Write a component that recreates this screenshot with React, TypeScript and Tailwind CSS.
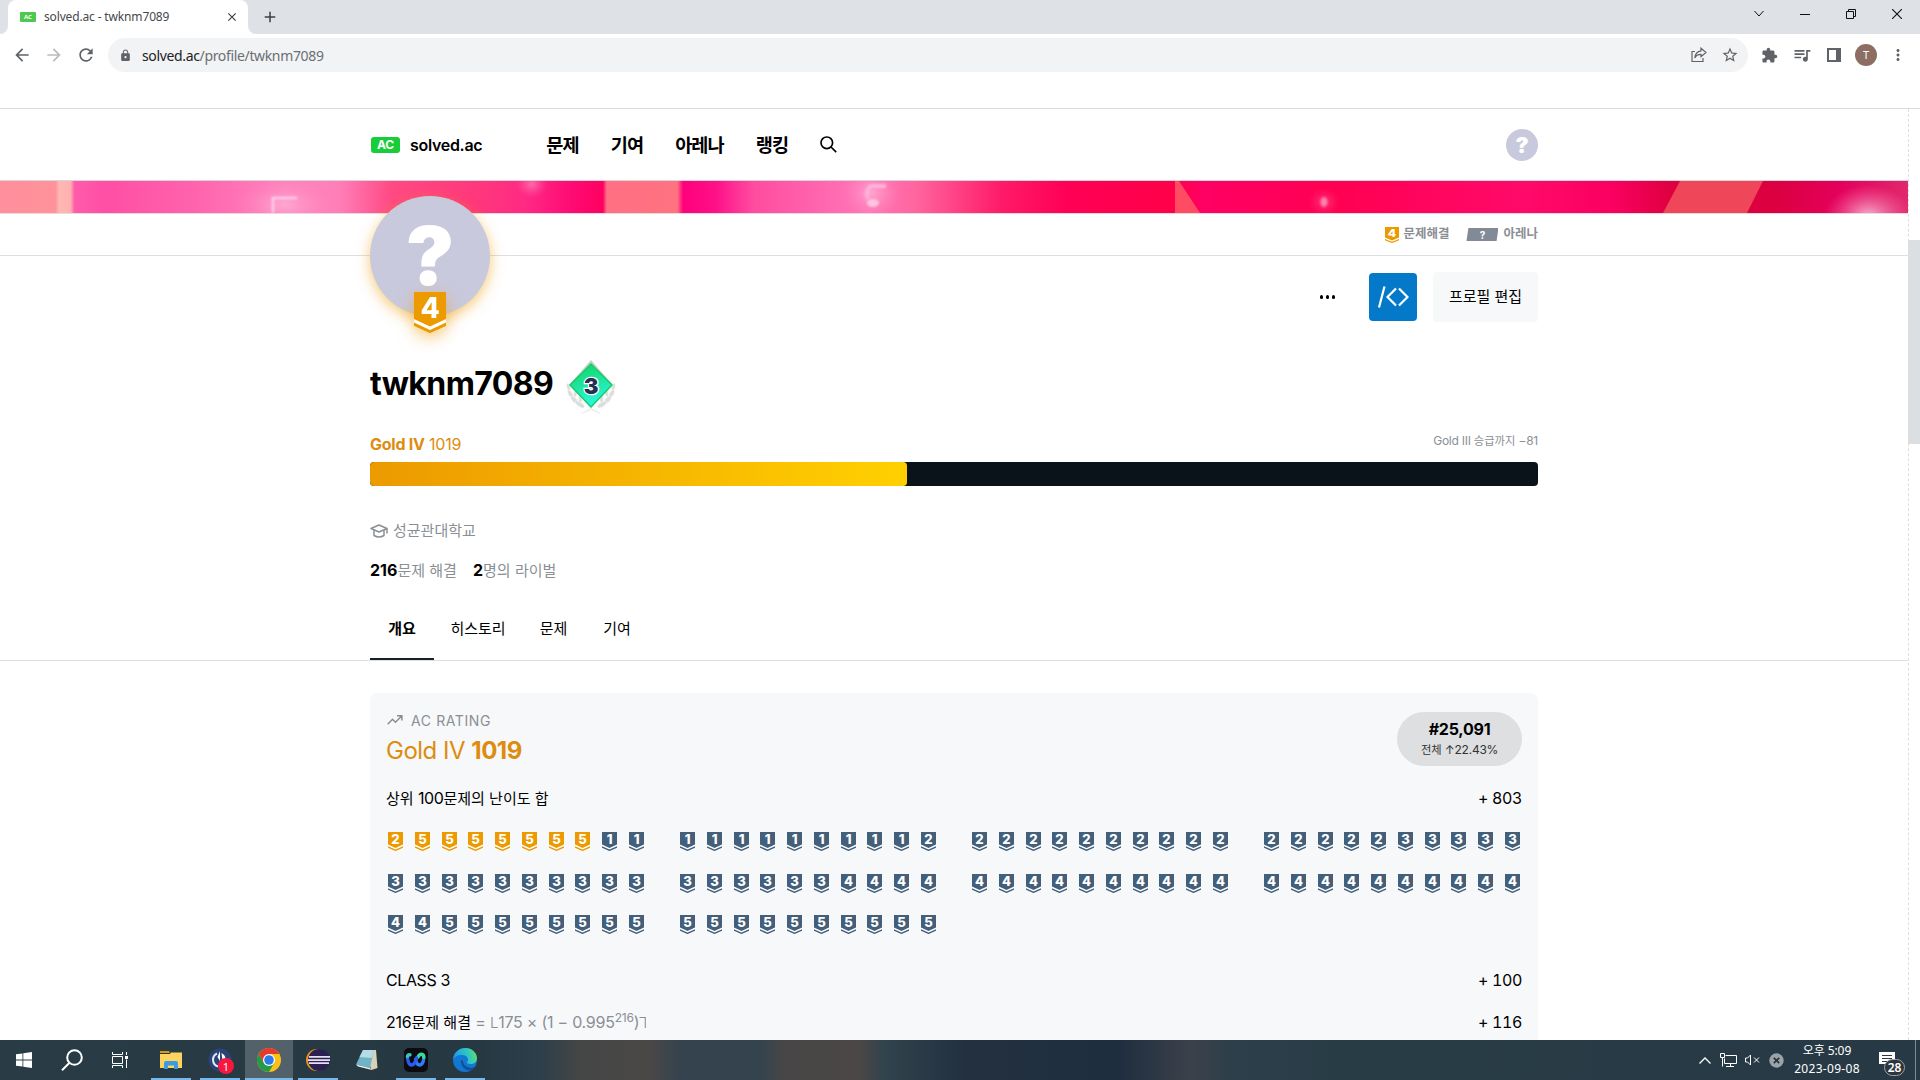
import React from "react";
import {
  MdArrowBack,
  MdArrowForward,
  MdRefresh,
  MdLock,
  MdStarBorder,
  MdExtension,
  MdQueueMusic,
  MdMoreVert,
  MdAdd,
  MdClose,
} from "react-icons/md";

const GOLD = "#ec9a00";
const SILVER = "#435f7a";

/* Hangul run, set slightly smaller than the Latin text beside it */
function K({ children }: { children: React.ReactNode }) {
  return <span className="text-[0.94em] tracking-normal">{children}</span>;
}

function Tier({ level, color, width, height }: { level: number; color: string; width: number; height: number }) {
  return (
    <svg width={width} height={height} viewBox="0 0 32 41" preserveAspectRatio="none" className="block shrink-0">
      <polygon points="0,26 16,34 32,26 32,34 16,41 0,34" fill="#fff" />
      <polygon points="0,0 32,0 32,27 16,34.5 0,27" fill={color} />
      <polygon points="0,30.5 16,38 32,30.5 32,34 16,41.2 0,34" fill={color} />
      <text x="16" y="26" textAnchor="middle" fontSize="28" fontWeight="800" fill="#fff" fontFamily="Inter, sans-serif">
        {level}
      </text>
    </svg>
  );
}

function AcLogo({ small }: { small?: boolean }) {
  return small ? (
    <span className="flex h-[10px] w-4 items-center justify-center rounded-[1px] bg-[#4cc94e] text-[6px] font-bold text-white">AC</span>
  ) : (
    <span className="flex h-4 w-[29px] items-center justify-center rounded-[3px] bg-[#17ce3a] text-[12px] font-bold leading-none text-white">AC</span>
  );
}

function BrowserChrome() {
  return (
    <div className="shrink-0 bg-white font-['Noto_Sans','Noto_Sans_CJK_KR',sans-serif]">
      <div className="flex h-[34px] items-end bg-[#dee1e6]">
        <div className="h-2 w-2 bg-white">
          <div className="h-2 w-2 rounded-br-lg bg-[#dee1e6]" />
        </div>
        <div className="flex h-[34px] w-[240px] items-center rounded-t-lg bg-white pl-3 pr-[9px]">
          <AcLogo small />
          <span className="ml-2 flex-1 text-[12px] tracking-[-0.15px] text-[#45494d]">solved.ac - twknm7089</span>
          <MdClose className="size-[14px] text-[#3c4043]" />
        </div>
        <div className="h-2 w-2 bg-white">
          <div className="h-2 w-2 rounded-bl-lg bg-[#dee1e6]" />
        </div>
        <MdAdd className="mb-2 ml-[5px] size-[18px] text-[#3c4043]" />
        <div className="ml-auto flex h-[28px] items-center gap-9 self-start pr-[18px]">
          <svg width="10" height="10" viewBox="0 0 10 10" fill="none" stroke="#111" strokeWidth="1"><path d="M0.5 2l4.5 5 4.5-5" /></svg>
          <svg width="10" height="10" viewBox="0 0 10 10" stroke="#111"><path d="M0 5.5h10" /></svg>
          <svg width="10" height="10" viewBox="0 0 10 10" fill="none" stroke="#111"><path d="M0.5 2.5h7v7h-7z M2.5 2.5v-2h7v7h-2" /></svg>
          <svg width="10" height="10" viewBox="0 0 10 10" stroke="#111" strokeWidth="1.1"><path d="M0 0l10 10M10 0L0 10" /></svg>
        </div>
      </div>
      <div className="flex h-[42px] items-center pl-3">
        <div className="flex items-center gap-3 text-[#5f6368]">
          <MdArrowBack className="size-5" />
          <MdArrowForward className="size-5 text-[#b9bcbf]" />
          <MdRefresh className="size-5" />
        </div>
        <div className="ml-3 flex h-[34px] w-[1640px] items-center rounded-full bg-[#f1f3f4] pl-[11px] pr-[9px] text-[#5f6368]">
          <MdLock className="size-[13px]" />
          <span className="ml-[10px] flex-1 text-[14px] tracking-[-0.35px] text-[#6b6f74]">
            <span className="text-[#202124]">solved.ac</span>/profile/twknm7089
          </span>
          <svg width="16" height="16" viewBox="0 0 16 16" fill="none" stroke="#5f6368" strokeWidth="1.2" className="mr-[14px]">
            <path d="M4 4.5H1v10h11v-3.5" />
            <path d="M10 1.2l5 4.3-5 4.3V7.4C7 7.4 5 8.6 3.8 11 4.2 7 6.5 4.2 10 3.8z" />
          </svg>
          <MdStarBorder className="size-[18px]" />
        </div>
        <div className="flex flex-1 items-center text-[#5f6368]">
          <MdExtension className="ml-[13px] size-[17px]" />
          <MdQueueMusic className="ml-[14px] size-5" />
          <svg width="14" height="14" viewBox="0 0 14 14" className="ml-[15px]"><path d="M0 0h14v14H0zM2 2v10h7V2z" fill="#5f6368" fillRule="evenodd" /></svg>
          <span className="ml-[14px] flex size-[22px] items-center justify-center rounded-full bg-[#8d6e63] text-[11px] text-white">T</span>
          <MdMoreVert className="ml-[12px] size-[18px]" />
        </div>
      </div>
      <div className="h-8" />
      <div className="h-px bg-[#d8dadc]" />
    </div>
  );
}

function Header() {
  return (
    <header className="flex h-[71px] items-center px-[370px]">
      <div className="flex items-center pl-px">
        <AcLogo />
        <span className="ml-[10px] text-[16px] font-semibold leading-none tracking-[-0.3px]">solved.ac</span>
      </div>
      <nav className="ml-16 mt-[2px] flex items-center gap-8 text-[18.6px] font-bold leading-none tracking-[-0.9px]">
        <span>문제</span>
        <span>기여</span>
        <span>아레나</span>
        <span>랭킹</span>
      </nav>
      <svg width="17" height="17" viewBox="0 0 17 17" fill="none" stroke="#000" strokeWidth="1.7" className="ml-8">
        <circle cx="6.8" cy="6.8" r="5.8" />
        <path d="M11 11l5.2 5.2" />
      </svg>
      <div className="ml-auto flex size-8 items-center justify-center rounded-full bg-[#c9c9de] text-[22px] font-black leading-none text-white">?</div>
    </header>
  );
}

function Banner() {
  return (
    <svg width="1908" height="32" viewBox="0 0 1908 32" preserveAspectRatio="none" className="block">
      <defs>
        <linearGradient id="bg" gradientUnits="userSpaceOnUse" x1="0" y1="0" x2="1908" y2="0">
          <stop offset="0" stopColor="#ff8f9c" />
          <stop offset="0.029" stopColor="#ff929a" />
          <stop offset="0.031" stopColor="#ffb8b5" />
          <stop offset="0.037" stopColor="#ffb0b0" />
          <stop offset="0.039" stopColor="#ff5cab" />
          <stop offset="0.055" stopColor="#ff4ea5" />
          <stop offset="0.1" stopColor="#ff62ac" />
          <stop offset="0.15" stopColor="#ff84be" />
          <stop offset="0.178" stopColor="#ff7eb8" />
          <stop offset="0.205" stopColor="#ff4a84" />
          <stop offset="0.25" stopColor="#ff377c" />
          <stop offset="0.275" stopColor="#ff2a84" />
          <stop offset="0.3" stopColor="#ff0a74" />
          <stop offset="0.316" stopColor="#ff0060" />
          <stop offset="0.318" stopColor="#ff7084" />
          <stop offset="0.355" stopColor="#ff7280" />
          <stop offset="0.358" stopColor="#ff007c" />
          <stop offset="0.375" stopColor="#ff1088" />
          <stop offset="0.395" stopColor="#ff4ca0" />
          <stop offset="0.455" stopColor="#ff78b8" />
          <stop offset="0.48" stopColor="#ff659e" />
          <stop offset="0.525" stopColor="#ff1a68" />
          <stop offset="0.56" stopColor="#ff0056" />
          <stop offset="0.615" stopColor="#ff0048" />
          <stop offset="0.63" stopColor="#ff0064" />
          <stop offset="0.7" stopColor="#ff0052" />
          <stop offset="0.8" stopColor="#ff0a6a" />
          <stop offset="0.845" stopColor="#fa0060" />
          <stop offset="0.875" stopColor="#e00042" />
          <stop offset="0.93" stopColor="#dc0040" />
          <stop offset="0.965" stopColor="#e4005c" />
          <stop offset="1" stopColor="#e2286c" />
        </linearGradient>
        <radialGradient id="glow">
          <stop offset="0" stopColor="#fff" stopOpacity="0.65" />
          <stop offset="1" stopColor="#ff9ccb" stopOpacity="0" />
        </radialGradient>
        <filter id="soft" x="-50%" y="-50%" width="200%" height="200%">
          <feGaussianBlur stdDeviation="0.9" />
        </filter>
      </defs>
      <rect width="1908" height="32" fill="url(#bg)" />
      <polygon points="1175,0 1179,0 1200,32 1175,32" fill="#ff4c62" />
      <polygon points="1680,0 1763,0 1747,32 1663,32" fill="#f0465a" />
      <ellipse cx="284" cy="24" rx="50" ry="24" fill="url(#glow)" opacity="0.45" />
      <path d="M273 32V17h24" fill="none" stroke="#ffd0ea" strokeWidth="2.5" filter="url(#soft)" />
      <ellipse cx="532" cy="3" rx="16" ry="14" fill="url(#glow)" opacity="0.5" />
      <ellipse cx="872" cy="12" rx="30" ry="24" fill="url(#glow)" opacity="0.5" />
      <path d="M886 5h-15q-4 2-4 9l1 4" fill="none" stroke="#ffb4da" strokeWidth="4" filter="url(#soft)" />
      <ellipse cx="873" cy="22" rx="6" ry="4" fill="#ffc4e2" filter="url(#soft)" />
      <ellipse cx="1324" cy="21" rx="16" ry="14" fill="url(#glow)" opacity="0.3" />
      <ellipse cx="1324" cy="21" rx="3.5" ry="5" fill="#ff7eaa" filter="url(#soft)" />
      <ellipse cx="1868" cy="34" rx="44" ry="30" fill="url(#glow)" />
    </svg>
  );
}

function ClassBadge() {
  return (
    <svg width="50" height="54" viewBox="0 0 50 54" className="block">
      <defs>
        <linearGradient id="cls" x1="0" y1="0" x2="0.3" y2="1">
          <stop offset="0" stopColor="#0fd45e" />
          <stop offset="0.5" stopColor="#1fe39a" />
          <stop offset="1" stopColor="#2cf5e0" />
        </linearGradient>
      </defs>
      <polygon points="25,0 46,24 25,48 4,24" fill="#c9cbcd" />
      <g fill="#dcddde" stroke="#fff" strokeWidth="0.5">
        {[0, 1].map((side) => (
          <g key={side} transform={side ? "translate(50 0) scale(-1 1)" : undefined}>
            <ellipse cx="2.500" cy="27" rx="1.8" ry="4" transform="rotate(-15 2.500 27)" />
            <ellipse cx="4.500" cy="34" rx="2.200" ry="4.600" transform="rotate(-30 4.500 34)" />
            <ellipse cx="8.500" cy="40" rx="2.400" ry="5" transform="rotate(-42 8.500 40)" />
            <ellipse cx="14" cy="44.500" rx="2.400" ry="5.200" transform="rotate(-58 14 44.500)" />
            <ellipse cx="9.500" cy="33" rx="1.800" ry="4" transform="rotate(10 9.500 33)" />
            <ellipse cx="14.500" cy="38.500" rx="1.900" ry="4.200" transform="rotate(2 14.500 38.500)" />
            <path d="M15 53q6-3 11-5.500l1 1q-5 3.500-11 5.500z" fill="#e8e9ea" />
          </g>
        ))}
      </g>
      <polygon points="25,4 46,25 25,47 4,25" fill="url(#cls)" stroke="#12cf68" strokeWidth="1.500" />
      <text x="25" y="34" textAnchor="middle" fontSize="22" fontWeight="900" fontFamily="Inter, sans-serif" fill="#233052" stroke="#fff" strokeWidth="2.500" paintOrder="stroke">
        3
      </text>
    </svg>
  );
}

function ProfileTop() {
  return (
    <section className="relative px-[370px]">
      <div className="absolute left-[370px] top-[-18px] size-[120px]">
        <div className="flex size-[120px] justify-center rounded-full bg-[#c9c9de] pt-[22px] text-[81px] font-black leading-[76px] text-white shadow-[0_4px_14px_rgba(236,154,0,0.55)]">
          ?
        </div>
        <div className="absolute left-11 top-24 drop-shadow-[0_5px_8px_rgba(236,154,0,0.5)]">
          <Tier level={4} color={GOLD} width={32} height={41} />
        </div>
      </div>
      <div className="-mx-[370px] flex h-[42px] items-center justify-end border-b border-[#dddfe0] px-[370px] text-[12.5px] font-bold leading-none tracking-normal text-[#8a8f95]">
        <Tier level={4} color={GOLD} width={14} height={16} />
        <span className="ml-[4px]">문제해결</span>
        <span className="ml-[17px] flex h-[13px] w-8 items-center justify-center bg-[#828a98] text-[10px] text-white [clip-path:polygon(6%_0,100%_0,94%_100%,0_100%)]">?</span>
        <span className="ml-[5px]">아레나</span>
      </div>
      <div className="flex h-[82px] items-center justify-end">
        <div className="flex gap-[2.5px]">
          <i className="size-[3.5px] rounded-full bg-black" />
          <i className="size-[3.5px] rounded-full bg-black" />
          <i className="size-[3.5px] rounded-full bg-black" />
        </div>
        <div className="ml-[34px] flex size-12 items-center justify-center rounded-[4px] bg-[#0479ca]">
          <svg width="32" height="24" viewBox="0 0 32 24" fill="none" stroke="#fff" strokeWidth="2.2">
            <path d="M7.5 1.5L2 22.5" />
            <path d="M19 3.500l-8.5 8.500 8.5 8.500M22 3.500l8.5 8.500-8.5 8.500" />
          </svg>
        </div>
        <div className="ml-4 flex h-[50px] w-[105px] items-center justify-center rounded-[4px] bg-[#f7f8fa] text-[15px] tracking-normal">프로필 편집</div>
      </div>
      <div className="flex h-[92px] items-center pb-px">
        <h1 className="text-[32px] font-bold leading-none">twknm7089</h1>
        <div className="ml-[13px] mt-[7px]">
          <ClassBadge />
        </div>
      </div>
      <div className="flex h-[32px] items-center justify-between pb-1 leading-none">
        <div className="text-[16px] text-[#dd8c10]">
          <b>Gold IV</b> 1019
        </div>
        <div className="-mt-1.5 text-[12px] text-[#8a8f95]">
          Gold III <K>승급까지</K> −81
        </div>
      </div>
      <div className="h-6 overflow-hidden rounded-[4px] bg-[#0b131a]">
        <div className="h-6 w-[537px] rounded-[4px] bg-gradient-to-r from-[#ec9a00] to-[#ffd000]" />
      </div>
      <div className="mt-8 flex h-6 items-center text-[15px] tracking-normal text-[#8a8f95]">
        <svg width="18" height="14" viewBox="0 0 18 14" fill="none" stroke="#8a8f95" strokeWidth="1.5" strokeLinejoin="round" className="mr-[5px] mt-px">
          <path d="M1 4.5L9 1l8 3.5L9 8z" />
          <path d="M4 6v5.5q5 3 10 0V6M17 4.5v5" />
        </svg>
        <span className="pt-0.5">성균관대학교</span>
      </div>
      <div className="mt-4 flex h-6 items-center gap-4 text-[16px] tracking-normal text-[#8a8f95]">
        <span>
          <b className="text-black">216</b>
          <K>문제 해결</K>
        </span>
        <span>
          <b className="text-black">2</b>
          <K>명의 라이벌</K>
        </span>
      </div>
      <div className="-mx-[370px] mt-4 flex h-[63px] border-b border-[#dddfe0] px-[370px] pb-0 text-center text-[15px] leading-[61px] tracking-normal">
        <div className="w-16 border-b-2 border-[#15202b] font-bold">개요</div>
        <div className="w-[88px]">히스토리</div>
        <div className="w-[63px]">문제</div>
        <div className="w-16">기여</div>
      </div>
    </section>
  );
}

/* [level, count] runs, in display order; the first eight are gold */
const RUNS: [number, number][] = [[2, 1], [5, 7], [1, 11], [2, 16], [3, 21], [4, 26], [5, 18]];
const LEVELS = RUNS.flatMap(([level, count]) => Array<number>(count).fill(level));
const GROUPS = Array.from({ length: 10 }, (_, i) => LEVELS.slice(i * 10, i * 10 + 10));

function Score({ value }: { value: number }) {
  return <span className="tabular-nums tracking-[-0.35px]">+ {value}</span>;
}

function RatingCard() {
  return (
    <section className="mx-[370px] mt-8 flex h-[400px] flex-col rounded-t-[8px] bg-[#f7f8fa] px-4 pt-4 text-[16px]">
      <div className="flex h-[66px] justify-between">
        <div>
          <div className="flex h-6 items-center text-[14px] leading-none tracking-[0.6px] text-[#8a8f95]">
            <svg width="16" height="10" viewBox="0 0 16 10" fill="none" stroke="#8a8f95" strokeWidth="1.5" className="-mt-0.5 ml-px mr-2">
              <path d="M0.7 9.2l4.8-5 3 3L14.6 1M10 0.8h4.9v4.7" />
            </svg>
            AC RATING
          </div>
          <div className="mt-[2px] text-[24px] leading-8 tracking-[-0.5px] text-[#dd8c10]">
            Gold IV <b>1019</b>
          </div>
        </div>
        <div className="mt-[3px] flex h-[54px] w-[125px] flex-col items-center rounded-[27px] bg-[#dddfe0] pt-[7px] leading-5">
          <b>#25,091</b>
          <span className="pt-px text-[12px] text-[#333]">
            <K>전체</K> ↑22.43%
          </span>
        </div>
      </div>
      <div className="mt-[11px] flex h-6 items-center justify-between">
        <K>상위 <span className="text-[16px] tracking-[-0.4px]">100</span>문제의 난이도 합</K>
        <Score value={803} />
      </div>
      <div className="mt-[22px] grid grid-cols-4 gap-x-8 gap-y-[22.5px]">
        {GROUPS.map((group, g) => (
          <div key={g} className="flex justify-between px-0.5">
            {group.map((level, i) => (
              <Tier key={i} level={level} color={g === 0 && i < 8 ? GOLD : SILVER} width={15} height={19} />
            ))}
          </div>
        ))}
      </div>
      <div className="mt-[34px] flex h-6 items-center justify-between">
        <span className="tracking-[-0.4px]">CLASS 3</span>
        <Score value={100} />
      </div>
      <div className="mt-[18px] flex h-6 items-center justify-between">
        <span>
          216<K>문제 해결</K>{" "}
          <span className="text-[#8a8f95]">
            = <span className="text-[15px] font-light">L</span>175 × (1 − 0.995<sup className="text-[12px]">216</sup>)
            <span className="inline-block rotate-180 text-[15px] font-light leading-none">L</span>
          </span>
        </span>
        <Score value={116} />
      </div>
    </section>
  );
}

function TaskItem({ running, active, children, className = "" }: { running?: boolean; active?: boolean; children: React.ReactNode; className?: string }) {
  return (
    <div className={`relative flex h-10 shrink-0 items-center justify-center ${active ? "w-[48px] bg-white/20" : "w-10"} ${className}`}>
      {children}
      {running && <i className="absolute inset-x-0 bottom-0 h-0.5 bg-[#76b9ed]" />}
    </div>
  );
}

function Taskbar() {
  return (
    <footer className="flex h-10 shrink-0 items-center bg-[linear-gradient(90deg,#293c46_0,#263943_480px,#2c3f4a_540px,#454646_580px,#4a4847_650px,#35434e_680px,#34434e_760px,#484646_785px,#4a4746_860px,#31434d_885px,#22303f_965px,#1f2e3f_1120px,#3b414a_1190px,#2c3f4a_1235px,#283c46_1350px,#263944_100%)]">
      <svg width="16" height="16" viewBox="0 0 16 16" fill="#fff" className="ml-4">
        <path d="M0 2.3L6.5 1.4v6.2H0zM7.3 1.3L16 0v7.6H7.3zM0 8.4h6.5v6.2L0 13.7zM7.3 8.4H16V16l-8.7-1.2z" />
      </svg>
      <svg width="22" height="22" viewBox="0 0 22 22" fill="none" stroke="#fff" strokeWidth="2" className="ml-[29px]">
        <circle cx="13.5" cy="8.5" r="7.3" />
        <path d="M8.5 13.8L1 21.3" />
      </svg>
      <svg width="16" height="16" viewBox="0 0 16 16" fill="none" stroke="#fff" className="ml-[29px]">
        <path d="M0.5 0v2.5h10V0M0.5 16v-2.5h10V16M0.5 4.5h10v7h-10zM14.5 0v3M14.5 7.5V16" />
        <path d="M13 4h3v3h-3z" fill="#fff" stroke="none" />
      </svg>
      <TaskItem running className="ml-[23px]">
        <svg width="22" height="18" viewBox="0 0 22 18">
          <path d="M0 0h9l1 2H0z" fill="#d99a08" />
          <path d="M0 3h10l1-1.5h11V17H0z" fill="#fdd462" />
          <path d="M4 18v-6q0-2 2-2h10q2 0 2 2v6h-4v-3.5H8V18z" fill="#3d9be0" />
        </svg>
      </TaskItem>
      <TaskItem running className="ml-[9px]">
        <span className="relative">
          <svg width="24" height="24" viewBox="0 0 24 24">
            <circle cx="12" cy="12" r="11.5" fill="#2a4378" />
            <path d="M9 5.500a7 7 0 0 0 1 13" fill="none" stroke="#e5eaf2" strokeWidth="2" />
            <path d="M12 3v10l-2.500-4zM13.500 5q4 2 4 6l-3 2z" fill="#fff" />
          </svg>
          <span className="absolute left-[10px] top-[10px] flex size-4 items-center justify-center rounded-full bg-[#f9173f] font-['Noto_Sans'] text-[11px] leading-none text-white">1</span>
        </span>
      </TaskItem>
      <TaskItem running active className="ml-[5px]">
        <svg width="24" height="24" viewBox="0 0 24 24">
          <circle cx="12" cy="12" r="12" fill="#fbc116" />
          <path d="M12 6h10.4A12 12 0 0 0 1.6 6l5.2 9z" fill="#e33b2e" />
          <path d="M1.6 6a12 12 0 0 0 10.4 18l5.2-9L12 17.5 6.8 15z" fill="#249a49" />
          <circle cx="12" cy="12" r="6" fill="#fff" />
          <circle cx="12" cy="12" r="4.8" fill="#2a7de8" />
        </svg>
      </TaskItem>
      <TaskItem running className="ml-[5px]">
        <svg width="24" height="24" viewBox="0 0 24 24">
          <circle cx="11" cy="12" r="11" fill="#f0941f" />
          <circle cx="13" cy="12" r="11" fill="#2a2052" />
          <path d="M3 8h21v1.8H3zM2 11.2h22V13H2zM3 14.2h20V16H3z" fill="#e6e1f2" />
        </svg>
      </TaskItem>
      <TaskItem className="ml-[9px]">
        <svg width="24" height="24" viewBox="0 0 24 24">
          <path d="M9 2h12l1.500 18-6 2z" fill="#d9d2b6" />
          <path d="M8 2h11l-4 18L1 16.500z" fill="#6fb4c4" />
          <path d="M8 2h11l-2 8L4.500 9z" fill="#b5dbe4" />
          <path d="M1 16.500l14 3.500 2 2-14-3.500z" fill="#eef2f2" />
        </svg>
      </TaskItem>
      <TaskItem running className="ml-[9px]">
        <svg width="24" height="24" viewBox="0 0 24 24" fill="none" strokeWidth="3.400" strokeLinecap="round">
          <rect width="24" height="24" rx="5" fill="#0b0b10" />
          <path d="M19.500 8c1 4-1 9-4 9-2.500 0-3.500-3-4-5.500" stroke="#2f7df6" />
          <path d="M14 9q1.500-3 3.500-2.700 2.500.4 2.300 3" stroke="#38d99a" />
          <path d="M3.500 8.500C3.500 13 5 17 7.800 17c3 0 4-4.500 4.700-7" stroke="#2b5cf0" />
          <path d="M3.500 8.500Q4 6 6 6.800" stroke="#36c8b8" />
        </svg>
      </TaskItem>
      <TaskItem running className="ml-[9px]">
        <svg width="24" height="24" viewBox="0 0 24 24">
          <defs>
            <linearGradient id="edge" x1="0" y1="0.3" x2="1" y2="0.1">
              <stop offset="0" stopColor="#1f9be0" />
              <stop offset="0.6" stopColor="#30c8c4" />
              <stop offset="1" stopColor="#6be04e" />
            </linearGradient>
          </defs>
          <circle cx="12" cy="12" r="12" fill="#1277d3" />
          <path d="M0 11.500C1 4.500 6 0 12.500 0 19 0 24 5 24 10c0 4-3 6-6.500 6-2.500 0-4-1-3.500-2 1-1 1.200-2 1-3-.6-2.500-3-4-6-4-4 0-8 2-9 4.500z" fill="url(#edge)" />
          <path d="M8.500 12c-1 5 3 10 8 10 2 0 4-1 5.500-3-6 2.500-12-.5-12-5z" fill="#263944" />
          <path d="M8.500 12c-.8 5 3 11 8.500 10.500 2-.5 3-1.500 4-2.500-6 1-11-3-11-6.500z" fill="#0f4f9c" />
        </svg>
      </TaskItem>
      <div className="ml-auto flex h-10 items-center">
        <svg width="12" height="7" viewBox="0 0 12 7" fill="none" stroke="#fff" strokeWidth="1.300"><path d="M0.500 6.500l5.500-5.500 5.500 5.500" /></svg>
        <svg width="17" height="14" viewBox="0 0 17 14" fill="none" stroke="#fff" className="ml-[9px]">
          <path d="M5.500 2.500h11v8h-12v-5M10.500 10.500v3M6 13.500h8M0.500 0.500h4v4h-4zM2.500 4.500v9" />
        </svg>
        <svg width="15" height="12" viewBox="0 0 15 12" fill="none" stroke="#fff" className="ml-2">
          <path d="M0.500 4v4h2l3 3V1l-3 3zM9 3.500l5 5M14 3.500l-5 5" />
        </svg>
        <svg width="15" height="15" viewBox="0 0 15 15" className="ml-[9px]">
          <circle cx="7.500" cy="7.500" r="7.200" fill="#9aa3a8" />
          <path d="M4.800 4.800l5.400 5.400M10.200 4.800l-5.400 5.400" stroke="#27333b" strokeWidth="1.700" />
        </svg>
        <div className="ml-[9px] w-[68px] text-center font-['Noto_Sans','Noto_Sans_CJK_KR',sans-serif] text-[12px] leading-[18px] tracking-[0.3px] text-white">
          <div className="whitespace-nowrap tracking-[-0.1px]">오후 5:09</div>
          <div className="whitespace-nowrap">2023-09-08</div>
        </div>
        <div className="relative ml-[18px] h-10 w-[26px]">
          <svg width="16" height="16" viewBox="0 0 16 16" className="mt-3">
            <path d="M0 0h16v12h-5v4l-4-4H0z" fill="#fff" />
            <path d="M3 3.500h10M3 6.500h10M3 9.500h7" stroke="#263944" />
          </svg>
          <span className="absolute left-[5px] top-[19px] flex h-[17px] w-[21px] items-center justify-center rounded-full border border-[#9aa3a8] bg-[#2e3439] font-['Noto_Sans'] text-[12px] font-semibold leading-none text-white">28</span>
        </div>
        <i className="ml-[10px] mr-1 h-10 w-px bg-[#7d8a91]" />
      </div>
    </footer>
  );
}

export default function App() {
  return (
    <div className="flex h-[1080px] w-[1920px] flex-col overflow-hidden bg-white font-['Inter','Noto_Sans_CJK_KR',sans-serif] text-black">
      <BrowserChrome />
      <div className="flex min-h-0 flex-1">
        <main className="w-[1908px] shrink-0 overflow-hidden tracking-[-0.015em] [&_h1]:tracking-[-0.6px]">
          <Header />
          <div className="h-px bg-[#d5d8da]" />
          <Banner />
          <div className="h-px bg-[#e3dcdf]" />
          <ProfileTop />
          <RatingCard />
        </main>
        <div className="w-3 border-l border-dashed border-[#dcdfe2] pt-[131px]">
          <div className="-ml-px h-[204px] bg-[#dcdfe2]" />
        </div>
      </div>
      <Taskbar />
    </div>
  );
}
